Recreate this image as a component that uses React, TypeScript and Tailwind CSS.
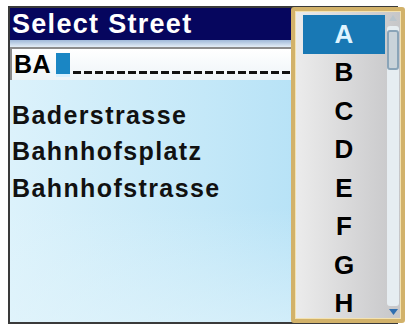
import React from "react";

const LETTERS = ["A", "B", "C", "D", "E", "F", "G", "H"];
const STREETS = ["Baderstrasse", "Bahnhofsplatz", "Bahnhofstrasse"];

function LetterPopup() {
  return (
    <div className="absolute left-[291px] top-[7px] flex h-[316px] w-[114px] overflow-hidden rounded-[3px] border-[4px] border-[#d2b26a] bg-gradient-to-r from-[#ececec] to-[#c6c6c8] shadow-[inset_0_0_0_1px_#f3e2b0]">
      <div className="flex flex-1 flex-col pl-[8px] pr-[2px] pt-[4px]">
        {LETTERS.map((l, i) => (
          <div
            key={l}
            className={
              i === 0
                ? "flex h-[38.5px] shrink-0 items-center justify-center bg-[#1878b4] text-[26px] font-bold text-[#dff4ff]"
                : "flex h-[38.5px] shrink-0 items-center justify-center text-[26px] font-bold text-black"
            }
          >
            {l}
          </div>
        ))}
      </div>
      {/* scrollbar */}
      <div className="flex w-[14px] flex-col items-center pr-[2px] pt-[3px] pb-[3px]">
        <svg width="10" height="8" viewBox="0 0 10 8">
          <path d="M5 1 L9 7 L1 7 Z" fill="#b8c4cc" />
        </svg>
        <div className="mt-[4px] flex w-[12px] flex-1 flex-col rounded-[3px] bg-[#e6edf1]">
          <div className="mt-[4px] h-[40px] w-[12px] rounded-[3px] border-[2px] border-[#8aa4b8] bg-[#c9d3da]" />
        </div>
        <svg width="11" height="8" viewBox="0 0 11 8" className="mt-[2px]">
          <path d="M1 1 L10 1 L5.5 7 Z" fill="#2f6fb0" />
        </svg>
      </div>
    </div>
  );
}

export default function App() {
  return (
    <div
      className="relative h-[326px] w-[412px] overflow-hidden bg-white pl-[8px] pt-[6px]"
      style={{ fontFamily: '"Liberation Sans", Arial, sans-serif' }}
    >
      <div className="flex h-[318px] w-[390px] flex-col border-l-[2px] border-t-[2px] border-b-[2px] border-[#3a3a3a] bg-gradient-to-r from-[#dcf2fb] via-[#c4e8f8] to-[#a9dcf5]">
        {/* title bar */}
        <div className="flex h-[32px] items-center bg-[#06065e] pl-[2px] text-[27px] font-bold tracking-[1.3px] text-white">
          Select Street
        </div>
        <div className="h-[7px] bg-gradient-to-b from-[#9fb8d8] to-[#e4eef6]" />
        {/* input */}
        <div className="flex h-[33px] items-center border-t-[2px] border-l-[2px] border-[#8c8c8c] bg-gradient-to-b from-[#ffffff] to-[#eef4f8] pl-[2px]">
          <span className="text-[25px] font-bold tracking-[0.5px] text-black">BA</span>
          <span className="ml-[5px] flex h-[24px] w-[14px] flex-col justify-end bg-[#1a86c4]">
            <span className="h-[3px] w-full bg-[#d8f0ff]" />
          </span>
          <div className="ml-[3px] mt-[16px] flex gap-[3px]">
            {Array.from({ length: 20 }).map((_, i) => (
              <span key={i} className="h-[3px] w-[8px] bg-[#111]" />
            ))}
          </div>
        </div>
        {/* list */}
        <div className="flex flex-col pl-[2px] pt-[17px]">
          {STREETS.map((s) => (
            <div key={s} className="flex h-[36.5px] items-center text-[25px] font-bold tracking-[1.4px] text-[#111]">
              {s}
            </div>
          ))}
        </div>
        <div className="flex-1 bg-gradient-to-b from-transparent to-[#e2f4fb]/60" />
      </div>
      <LetterPopup />
    </div>
  );
}
